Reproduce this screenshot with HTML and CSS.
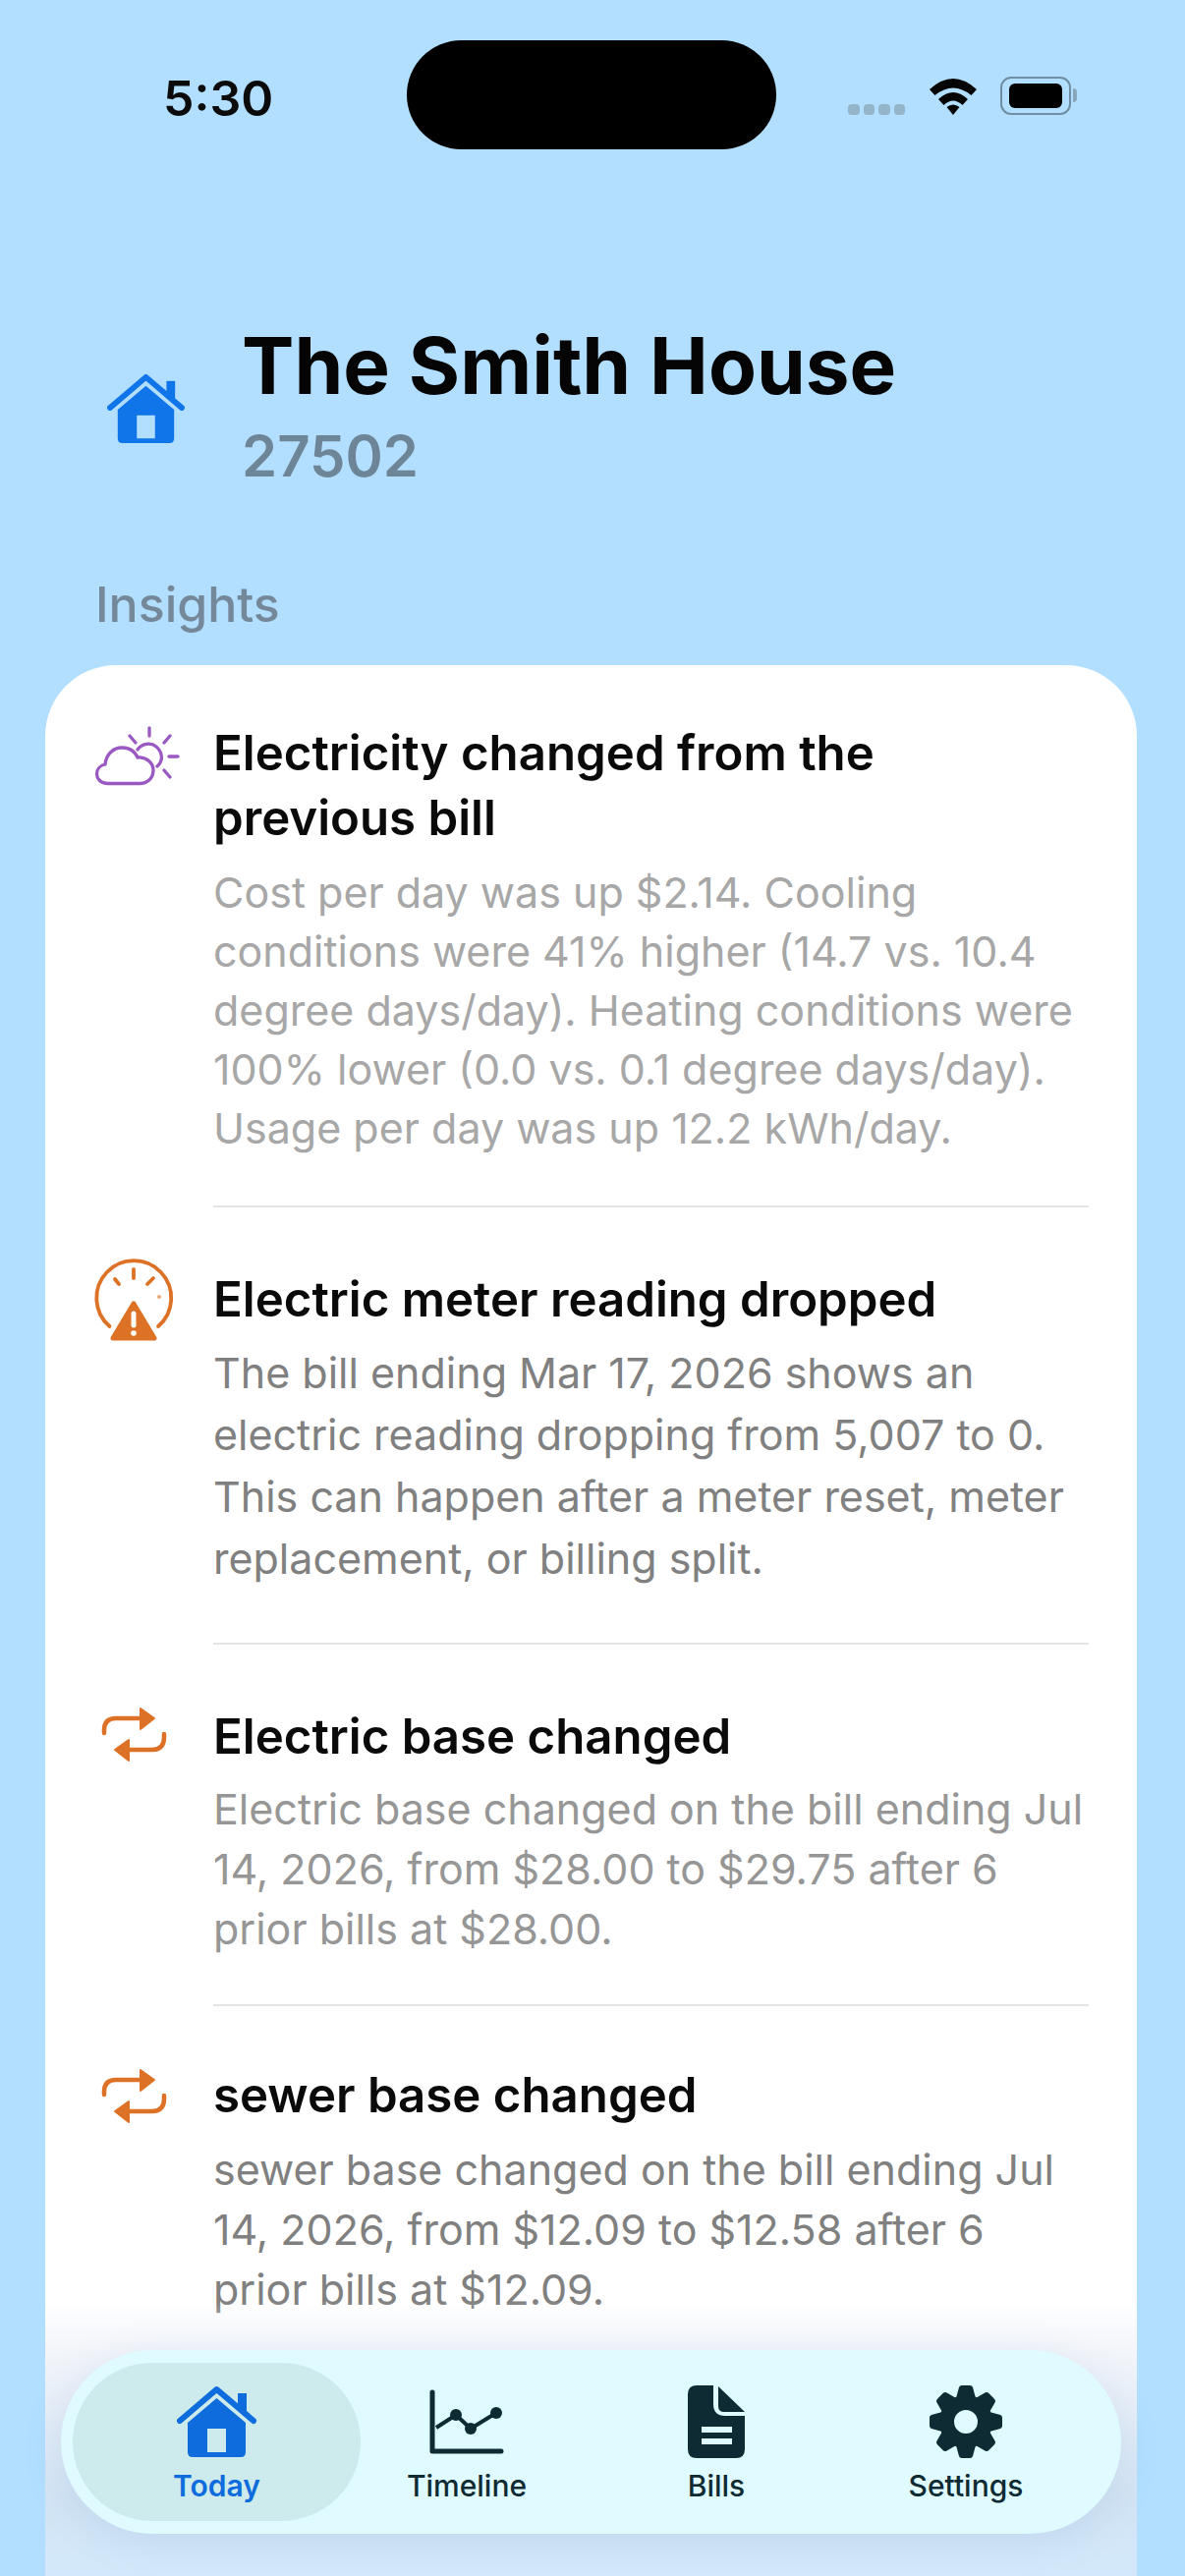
FILE: index.html
```html
<!DOCTYPE html>
<html lang="en">
<head>
    <meta charset="UTF-8">
    <meta name="viewport" content="width=device-width, initial-scale=1.0">
    <title>The Smith House</title>
    <link rel="stylesheet" href="styles.css">
</head>
<body>
    <svg class="defs" width="0" height="0">
        <symbol id="house" viewBox="0 0 81 74">
            <path d="M3 36 L40.500 4 L78 36" fill="none" stroke="currentColor" stroke-width="6" stroke-linecap="round" stroke-linejoin="round"/>
            <rect x="62" y="8" width="9" height="18" fill="currentColor"/>
            <path fill="currentColor" fill-rule="evenodd" d="M40.500 13 L70 38 V68 Q70 73 65 73 H16 Q11 73 11 68 V38 Z M31 44 V68 H50 V44 Z"/>
        </symbol>
        <symbol id="repeat" viewBox="0 0 70 62">
            <g fill="none" stroke="#dd7226" stroke-width="4.500" stroke-linecap="round">
                <path d="M3 29 V26 Q3 14 15 14 H42"/>
                <path d="M64 30 V33 Q64 46 52 46 H26"/>
            </g>
            <path fill="#dd7226" stroke="#dd7226" stroke-width="2" stroke-linejoin="round" d="M40 4 L54 14 L40 25 Z"/>
            <path fill="#dd7226" stroke="#dd7226" stroke-width="2" stroke-linejoin="round" d="M28 36 L14 46 L28 57 Z"/>
        </symbol>
    </svg>

    <div class="phone">
        <div class="status-bar">
            <span class="clock">5:30</span>
            <div class="island"></div>
            <div class="status-icons">
                <div class="signal"><i></i><i></i><i></i><i></i></div>
                <svg class="wifi" width="50" height="39" viewBox="0 0 50 39">
                    <path d="M1 13 Q25 -9 49 13 L43.500 19 Q25 4 6.500 19 Z"/>
                    <path d="M10 23 Q25 9 40 23 L34.500 29 Q25 20 15.500 29 Z"/>
                    <path d="M18.500 31 Q25 26 31.500 31 L25 39 Z"/>
                </svg>
                <div class="battery"><div class="battery-fill"></div></div>
            </div>
        </div>

        <header class="place">
            <svg class="place-icon" width="81" height="72"><use href="#house"/></svg>
            <div>
                <h1>The Smith House</h1>
                <div class="zip">27502</div>
            </div>
        </header>

        <h2 class="section-label">Insights</h2>

        <main class="card">
            <section class="insight insight-first">
                <svg class="insight-icon" width="90" height="66" viewBox="34 36 90 66">
                    <g fill="none" stroke="#9a58c2" stroke-width="3.300" stroke-linecap="round" stroke-linejoin="round">
                        <path d="M50 95.500 C42 95.500 38.500 90 38.500 86 C38.500 81 42 77 47 76 C48 66 55 59 64 59 C71 59 77 62 80 69 C88 68 96 74 96 82 C96 90 90 95.500 82 95.500 Z"/>
                        <path d="M80 61 C84 55 93 53 99 58 C106 64 106 73 100 78"/>
                        <path d="M92 39 V47 M72 47 L78 54 M113 47 L107 54 M112 68 H121 M107 82 L113 89"/>
                    </g>
                </svg>
                <div class="insight-text">
                    <h3>Electricity changed from the previous bill</h3>
                    <p class="tone-light">Cost per day was up $2.14. Cooling conditions were 41% higher (14.7 vs. 10.4 degree days/day). Heating conditions were 100% lower (0.0 vs. 0.1 degree days/day). Usage per day was up 12.2 kWh/day.</p>
                </div>
            </section>
            <section class="insight insight-second">
                <svg class="insight-icon" width="90" height="90" viewBox="32 36 90 90">
                    <path d="M52.500 110 A38 38 0 1 1 102 110" fill="none" stroke="#dd7226" stroke-width="3.800" stroke-linecap="round"/>
                    <path d="M77 52 V61 M58 62 L62 67 M97 61 L91 67" fill="none" stroke="#dd7226" stroke-width="3.800" stroke-linecap="round"/>
                    <circle cx="103" cy="80" r="2" fill="#eaa67a"/>
                    <path d="M77 87 L98 122 H56 Z" fill="#dd7226" stroke="#dd7226" stroke-width="5" stroke-linejoin="round"/>
                    <path d="M77 97 V109" stroke="#fff" stroke-width="5" stroke-linecap="round"/>
                    <circle cx="77" cy="117" r="2.800" fill="#fff"/>
                </svg>
                <div class="insight-text">
                    <h3>Electric meter reading dropped</h3>
                    <p class="tone-dark">The bill ending Mar 17, 2026 shows an electric reading dropping from 5,007 to 0. This can happen after a meter reset, meter replacement, or billing split.</p>
                </div>
            </section>
            <section class="insight insight-third">
                <svg class="insight-icon icon-repeat" width="70" height="62"><use href="#repeat"/></svg>
                <div class="insight-text">
                    <h3>Electric base changed</h3>
                    <p class="tone-mid">Electric base changed on the bill ending Jul 14, 2026, from $28.00 to $29.75 after 6 prior bills at $28.00.</p>
                </div>
            </section>
            <section class="insight insight-fourth">
                <svg class="insight-icon icon-repeat" width="70" height="62"><use href="#repeat"/></svg>
                <div class="insight-text">
                    <h3>sewer base changed</h3>
                    <p class="tone-dark">sewer base changed on the bill ending Jul 14, 2026, from $12.09 to $12.58 after 6 prior bills at $12.09.</p>
                </div>
            </section>
            <div class="card-fade"></div>
        </main>

        <nav class="tab-bar">
            <a class="tab tab-active">
                <svg width="81" height="74"><use href="#house"/></svg>
                <span>Today</span>
            </a>
            <a class="tab">
                <svg width="76" height="74" viewBox="0 -5 76 74">
                    <path d="M3 2 V62 H73" fill="none" stroke="currentColor" stroke-width="5" stroke-linecap="round" stroke-linejoin="round"/>
                    <path d="M7 38 L27 25 L42 39 L68 23" fill="none" stroke="currentColor" stroke-width="4"/>
                    <circle cx="27" cy="25" r="6" fill="currentColor"/>
                    <circle cx="42" cy="39" r="6" fill="currentColor"/>
                    <circle cx="68" cy="23" r="6" fill="currentColor"/>
                </svg>
                <span>Timeline</span>
            </a>
            <a class="tab">
                <svg width="58" height="74" viewBox="0 0 58 74">
                    <path fill="currentColor" fill-rule="evenodd" d="M9 0 H26 V19 Q26 31 38 31 H58 V65 Q58 74 49 74 H9 Q0 74 0 65 V9 Q0 0 9 0 Z M14 42 V48 H45 V42 Z M14 54 V60 H45 V54 Z"/>
                    <path fill="currentColor" d="M31 1 L58 27 H37 Q31 27 31 21 Z"/>
                </svg>
                <span>Bills</span>
            </a>
            <a class="tab">
                <svg width="74" height="74" viewBox="-37 -37 74 74">
                    <defs><path id="tooth" d="M-10 -24 L-7 -35 Q-6.500 -37 -4 -37 H4 Q6.500 -37 7 -35 L10 -24 Z"/></defs>
                    <g fill="currentColor">
                        <use href="#tooth"/>
                        <use href="#tooth" transform="rotate(45)"/>
                        <use href="#tooth" transform="rotate(90)"/>
                        <use href="#tooth" transform="rotate(135)"/>
                        <use href="#tooth" transform="rotate(180)"/>
                        <use href="#tooth" transform="rotate(225)"/>
                        <use href="#tooth" transform="rotate(270)"/>
                        <use href="#tooth" transform="rotate(315)"/>
                    </g>
                    <circle r="19.500" fill="none" stroke="currentColor" stroke-width="15"/>
                </svg>
                <span>Settings</span>
            </a>
        </nav>
    </div>
</body>
</html>
```

FILE: styles.css
```css
* {
    box-sizing: border-box;
}
body {
    margin: 0;
    font-family: Inter, 'Noto Sans', sans-serif;
    background-color: #b2dfff;
}
h1, h2, h3, p {
    margin: 0;
}
.defs {
    display: block;
    height: 0;
}
.phone {
    position: relative;
    display: flex;
    flex-direction: column;
    width: 1206px;
    height: 2622px;
    overflow: hidden;
}
.status-bar {
    display: flex;
    align-items: flex-start;
    height: 152px;
    padding: 41px 0 0 166px;
}
.clock {
    width: 248px;
    margin-top: 24px;
    font-size: 50px;
    line-height: 70px;
    font-weight: 600;
    color: #0b0b0b;
}
.island {
    width: 376px;
    height: 111px;
    border-radius: 56px;
    background-color: #000;
}
.status-icons {
    display: flex;
    align-items: flex-end;
    margin: 37px 0 0 73px;
    height: 39px;
}
.signal {
    display: flex;
    gap: 4px;
    margin-right: 24px;
}
.signal i {
    width: 11.500px;
    height: 11px;
    border-radius: 4px;
    background-color: #94b4ca;
}
.wifi {
    fill: #050505;
    margin-right: 23px;
}
.battery {
    position: relative;
    width: 72px;
    height: 39px;
    padding: 5px 7px;
    border: 2.500px solid #6f8da3;
    border-radius: 11px;
}
.battery::after {
    content: '';
    position: absolute;
    top: 10px;
    right: -8px;
    width: 4px;
    height: 14px;
    border-radius: 0 4px 4px 0;
    background-color: #8aa6ba;
}
.battery-fill {
    height: 100%;
    border-radius: 6px;
    background-color: #000;
}
.place {
    display: flex;
    align-items: center;
    gap: 57px;
    margin-top: 172px;
    padding-left: 108px;
}
.place-icon {
    margin-top: 8px;
    color: #0f75e8;
}
.place h1 {
    font-size: 80px;
    line-height: 96px;
    font-weight: 700;
    color: #050505;
}
.zip {
    margin-top: 9px;
    font-size: 58px;
    line-height: 70px;
    font-weight: 600;
    color: #6e8598;
}
.section-label {
    margin-top: 86px;
    padding-left: 97px;
    font-size: 50px;
    line-height: 60px;
    font-weight: 500;
    color: #75889a;
}
.card {
    position: relative;
    flex: 1;
    margin: 32px 49px 0 46px;
    padding: 0 49px 0 51px;
    overflow: hidden;
    border-radius: 72px 72px 0 0;
    background-color: #fff;
}
.insight {
    display: grid;
    grid-template-columns: 120px 1fr;
}
.insight-icon {
    margin: 61px 0 0 -3px;
}
.insight-second .insight-icon {
    margin: 47px 0 0 -6px;
}
.icon-repeat {
    margin-left: 6px;
}
.insight-text {
    padding: 60px 0 46px;
    border-bottom: 2px solid #e3e3e3;
}
.insight-first .insight-text {
    padding: 56px 0 49px;
}
.insight-second .insight-text {
    padding-bottom: 54px;
}
.insight-fourth .insight-text {
    padding-top: 57px;
    border-bottom: none;
}
.insight h3 {
    font-size: 49.200px;
    line-height: 66px;
    font-weight: 600;
    color: #0a0a0a;
}
.insight p {
    margin-top: 11px;
    font-size: 43px;
    line-height: 61px;
}
.insight-first p {
    margin-top: 13px;
    line-height: 60px;
}
.insight-second p {
    line-height: 63px;
}
.insight-fourth p {
    margin-top: 13px;
}
.tone-light {
    color: #a7a7a7;
}
.tone-mid {
    color: #969696;
}
.tone-dark {
    color: #808080;
}
.card-fade {
    position: absolute;
    left: 0;
    right: 0;
    bottom: 0;
    height: 280px;
    background: linear-gradient(to bottom, rgba(255, 255, 255, 0), rgba(240, 243, 249, 0.9) 20%, #d2e4f4 72%, #d3e9fb);
}
.tab-bar {
    position: absolute;
    left: 62px;
    top: 2392px;
    display: flex;
    width: 1079px;
    height: 187px;
    padding: 13px 12px;
    border-radius: 94px;
    background-color: #e0fbff;
    box-shadow: 0 8px 40px rgba(90, 130, 190, 0.14);
}
.tab {
    display: flex;
    flex-direction: column;
    align-items: center;
    width: 254px;
    padding-top: 23px;
    color: #0e2a33;
}
.tab svg {
    display: block;
    height: 74px;
}
.tab span {
    margin-top: 10px;
    font-size: 30px;
    line-height: 36px;
    font-weight: 500;
}
.tab-active {
    width: 293px;
    margin-right: -19px;
    border-radius: 81px;
    background-color: #cdebec;
    color: #0f6cdc;
}
.tab-active span {
    font-weight: 600;
}
```
